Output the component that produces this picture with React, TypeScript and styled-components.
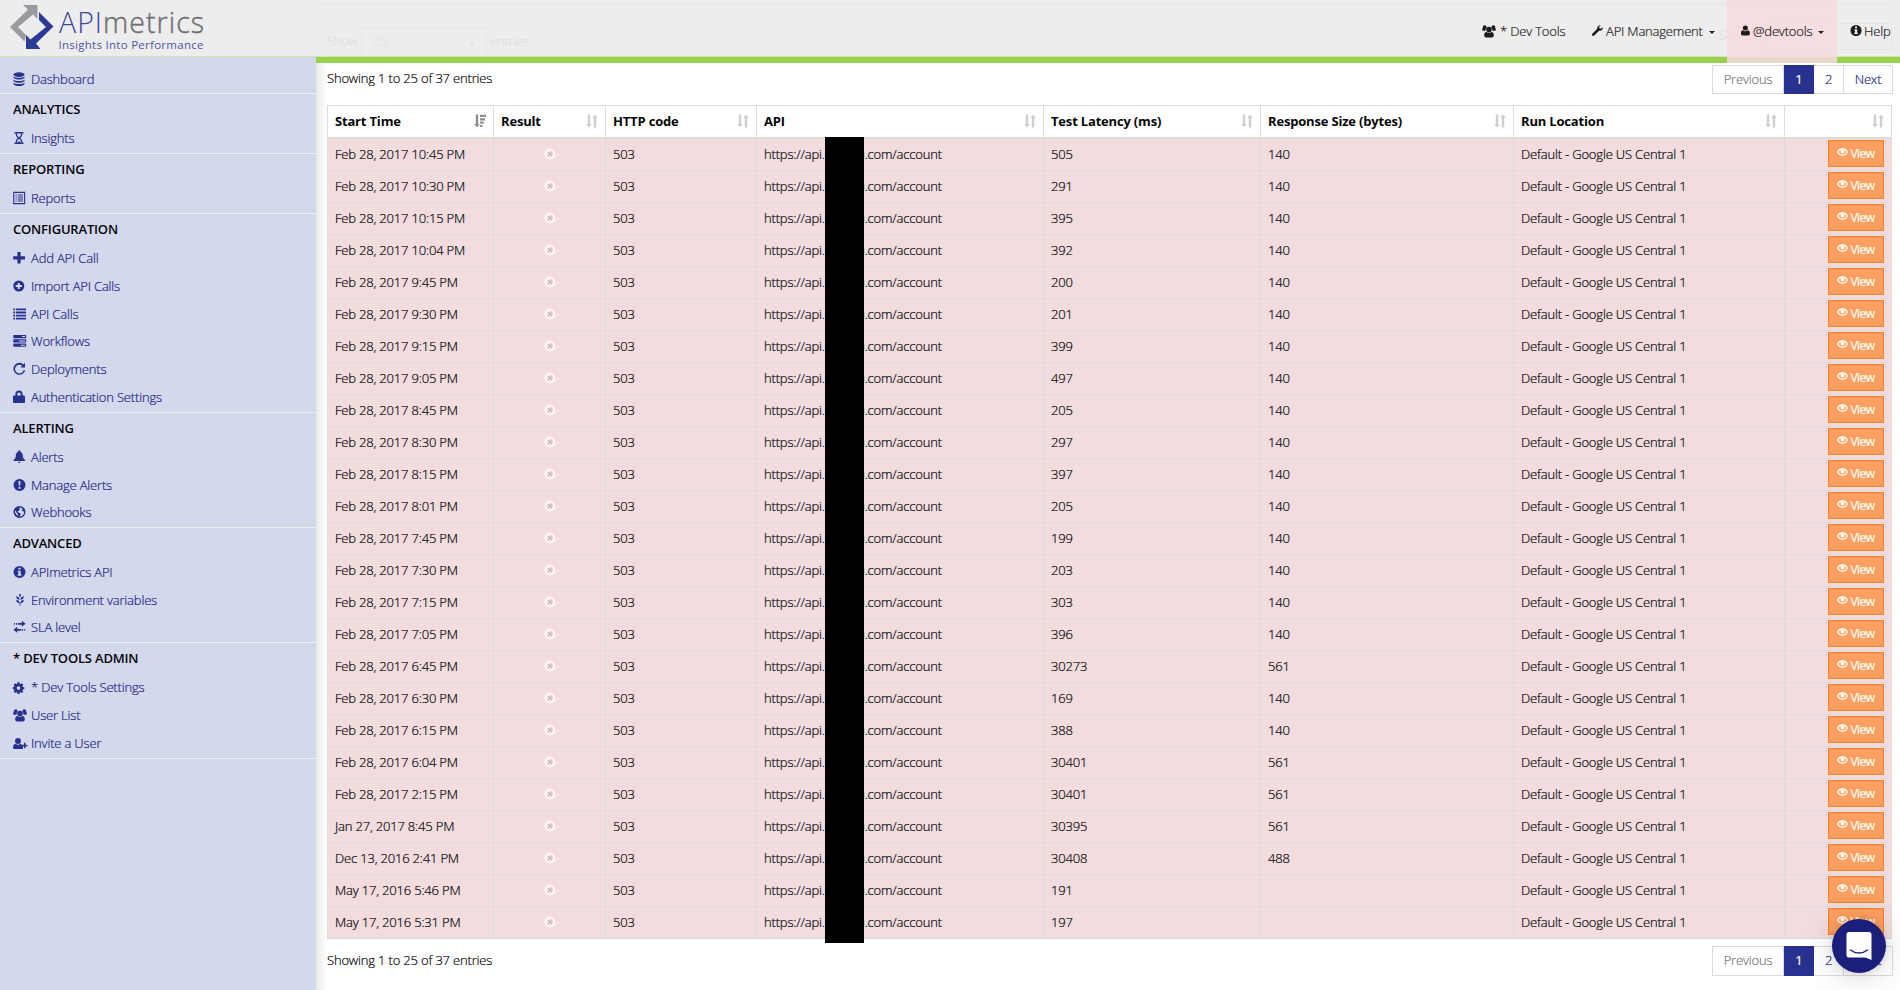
import React from 'react';
import styled, { createGlobalStyle, css } from 'styled-components';

const navy = '#27318f';
const linkNavy = '#1b2585';
const line = '#dadddc';

const GlobalStyle = createGlobalStyle`
  *, *::before, *::after { box-sizing: border-box; }
  body {
    margin: 0;
    background: #fff;
    color: #050509;
    font: 300 13px/18px "Open Sans", "Noto Sans", sans-serif;
    letter-spacing: -0.18px;
    -webkit-text-stroke: 0.2px;
  }
`;

const Page = styled.div`
  width: 1900px;
  height: 990px;
  overflow: hidden;
  display: flex;
  flex-direction: column;
  position: relative;
`;

const Header = styled.header`
  height: 57px;
  flex: none;
  position: relative;
  z-index: 2;
  display: flex;
  justify-content: space-between;
  background: #ededed;
  border-bottom: 1px solid #d3e5b5;
`;

const Ghost = styled.div`
  position: absolute;
  inset: 4px 8px 0 317px;
  overflow: hidden;
  border-top: 1px solid #e6e6e6;
  color: #e2e2e2;
  pointer-events: none;
`;

const GhostPart = styled.span<{ $x: number; $y: number }>`
  position: absolute;
  left: ${p => p.$x}px;
  top: ${p => p.$y}px;
`;

const GhostBox = styled(GhostPart)<{ $h: number }>`
  width: 126px;
  height: ${p => p.$h}px;
  border: 1px solid #e4e4e4;
  padding: 4px 11px;
`;

const GhostCaret = styled(GhostPart)`
  border: 3px solid transparent;
  border-top-color: #e0e0e0;
  border-bottom: 0;
`;

const Nav = styled.nav`
  display: flex;
  position: relative;
  height: 63px;
  color: #1c1c1c;
`;

const NavItem = styled.a<{ $w: number; $pad: number; $active?: boolean }>`
  width: ${p => p.$w}px;
  padding: 0 0 2px ${p => p.$pad}px;
  height: 63px;
  display: flex;
  align-items: center;
  white-space: nowrap;
  background: ${p => (p.$active ? 'rgba(247, 218, 222, 0.86)' : 'none')};
`;

const NavIcon = styled.span<{ $w: number }>`
  width: ${p => p.$w}px;
  display: flex;
  flex: none;
`;

const Caret = styled.i`
  margin: 3px 0 0 6px;
  border: 3px solid transparent;
  border-top-color: #222;
  border-bottom: 0;
`;

const Body = styled.div`
  flex: 1;
  display: flex;
  min-height: 0;
`;

const Sidebar = styled.aside`
  width: 316px;
  flex: none;
  background: #d4d8ec;
  padding-top: 8px;
`;

const Group = styled.section`
  border-bottom: 1px solid #ececf2;
  padding-bottom: 1px;
  &:first-child { padding-bottom: 0; }
`;

const GroupTitle = styled.h4`
  margin: 0;
  height: 30px;
  padding: 6px 0 0 13px;
  font-size: 13px;
  font-weight: 600;
  line-height: 18px;
  -webkit-text-stroke: 0;
`;

const SideLink = styled.a<{ $h?: number }>`
  height: ${p => p.$h ?? 28}px;
  padding: 0 0 ${p => (p.$h ? 1 : 0)}px 13px;
  display: flex;
  align-items: center;
  color: ${linkNavy};
`;

const IconSlot = styled.span`
  width: 18px;
  flex: none;
  display: flex;
  color: ${navy};
`;

const Main = styled.main`
  flex: 1;
  min-width: 0;
  border-top: 6px solid #9bd04e;
  background: linear-gradient(to right, #e9e9e9, #fff 11px);
  padding: 2px 7px 0 11px;
`;

const TableBar = styled.div<{ $bottom?: boolean }>`
  display: flex;
  justify-content: space-between;
  height: ${p => (p.$bottom ? 30 : 29)}px;
  line-height: ${p => (p.$bottom ? 28 : 26)}px;
  margin: ${p => (p.$bottom ? '7px 0 0' : '0 0 11px')};
`;

const Pager = styled.div`
  display: flex;
  border: 1px solid ${line};
  width: 181px;
`;

const PageButton = styled.a<{ $w: number; $kind?: 'on' | 'off' }>`
  width: ${p => p.$w}px;
  text-align: center;
  line-height: 26px;
  color: ${p => (p.$kind === 'off' ? '#777' : linkNavy)};
  & + & { border-left: 1px solid ${line}; }
  ${p =>
    p.$kind === 'on' &&
    css`
      && { margin: -1px 0; padding: 1px 0; border: 0; }
      background: ${navy};
      color: #fff;
      font-weight: 400;
      & + a { border-left: 0 !important; }
    `}
`;

const TableWrap = styled.div`
  position: relative;
  width: 1565px;
`;

const Table = styled.table`
  width: 1565px;
  table-layout: fixed;
  border-collapse: separate;
  border-spacing: 0;
  border-left: 1px solid ${line};
  border-top: 1px solid ${line};
`;

const Th = styled.th`
  height: 33px;
  padding: 0 7px 1px;
  text-align: left;
  font-weight: 700;
  border-right: 1px solid ${line};
  border-bottom: 2px solid ${line};
  background: #fff;
  -webkit-text-stroke: 0;
`;

const ThInner = styled.div`
  display: flex;
  align-items: center;
  justify-content: space-between;
`;

const Td = styled.td<{ $align?: 'center' | 'right' }>`
  height: 32px;
  padding: 0 7px 2px;
  line-height: 18px;
  text-align: ${p => p.$align ?? 'left'};
  white-space: nowrap;
  background: #f2dcde;
  border-right: 1px solid ${line};
  border-bottom: 1px solid ${line};
`;

const FailMark = styled.span`
  display: flex;
  justify-content: center;
  padding-left: 1px;
`;

const HostGap = styled.span`
  display: inline-block;
  width: 40px;
  text-align: right;
`;

const Redaction = styled.div`
  position: absolute;
  left: 498px;
  top: 32px;
  width: 39px;
  height: 806px;
  background: #000;
`;

const ViewButton = styled.button`
  display: inline-flex;
  align-items: center;
  justify-content: center;
  gap: 2px;
  vertical-align: top;
  width: 56px;
  height: 27px;
  padding: 0;
  border: 1px solid #ff7c2c;
  background: #ff9f5f;
  color: #fff;
  font: 400 12px/16px "Open Sans", sans-serif;
  letter-spacing: -0.5px;
  svg { margin-top: -2px; }
`;

const Chat = styled.div`
  position: absolute;
  left: 1832px;
  top: 919px;
  width: 54px;
  height: 54px;
  border-radius: 50%;
  background: #1b1f7b;
  box-shadow: 0 1px 6px rgba(0, 0, 0, 0.1), 0 2px 32px rgba(0, 0, 0, 0.18);
  display: flex;
  align-items: center;
  justify-content: center;
`;

const glyphs: Record<string, React.ReactNode> = {
  database: (
    <>
      <ellipse cx="6" cy="2.600" rx="5.500" ry="2.300" />
      <path d="M.5 4.200c1.500 2 9.500 2 11 0v1.600c-1.500 2.400-9.500 2.400-11 0zM.5 7.400c1.500 2 9.500 2 11 0V9c-1.500 2.400-9.500 2.400-11 0zM.5 10.600c1.500 2 9.500 2 11 0v1.300c-1.500 2.700-9.500 2.700-11 0z" />
    </>
  ),
  hourglass: (
    <path fillRule="evenodd" d="M1.500 1h9v1.500H9.300c0 2.500-.8 3.600-2.200 4.500 1.400.9 2.200 2 2.200 4.500h1.200V13h-9v-1.500h1.200c0-2.500.8-3.600 2.200-4.500C3.500 6.100 2.700 5 2.700 2.500H1.500zM3.900 2.500C4 4.700 5.200 5.500 6 6.200c.8-.7 2-1.500 2.100-3.700zM3.900 11.500h.7L6 10l1.400 1.500h.7C8 9.300 6.800 8.500 6 7.800c-.8.7-2 1.500-2.100 3.700z" />
  ),
  listAlt: (
    <path fillRule="evenodd" d="M.2.8h12v12.400H.2zM1.300 1.900v10.200h9.800V1.900zM2.500 3.500h1.200v1H2.500zm2.200 0H10v1H4.700zM2.500 5.500h1.200v1H2.500zm2.200 0H10v1H4.700zM2.500 7.500h1.200v1H2.500zm2.200 0H10v1H4.700zM2.500 9.500h1.200v1H2.500zm2.200 0H10v1H4.700z" />
  ),
  plus: <path d="M4.400 1h3.200v4.200H12v3.200H7.600v4.200H4.400V8.400H.2V5.200h4.200z" />,
  plusCircle: (
    <path fillRule="evenodd" d="M5.800 1.500a5.500 5.500 0 1 1 0 11 5.500 5.500 0 0 1 0-11zM4.800 3.900V6H2.700v2h2.100v2.100h2V8h2.100V6H6.800V3.900z" />
  ),
  list: (
    <path d="M.3 1.500h1.800v1.800H.3zm2.700 0h10v1.800H3zM.3 4.600h1.800v1.800H.3zm2.700 0h10v1.800H3zM.3 7.700h1.800v1.800H.3zm2.700 0h10v1.800H3zM.3 10.800h1.800v1.800H.3zm2.700 0h10v1.800H3z" />
  ),
  tasks: (
    <path fillRule="evenodd" d="M.8 1h11.900l.5.500v2.200l-.5.500H.8l-.5-.5V1.500zM9 2.100v1h3v-1zM.8 5.300h11.900l.5.500V8l-.5.500H.8L.3 8V5.800zM6 6.400v1h6v-1zM.8 9.600h11.900l.5.500v2.200l-.5.500H.8l-.5-.5v-2.200zM8 10.700v1h4v-1z" />
  ),
  repeat: (
    <path d="M6.300.8c1.600 0 3 .6 4 1.600L12 .8v4.600H7.500l1.600-1.600a4.300 4.300 0 1 0 1.400 4.400h1.700A6 6 0 1 1 6.300.8z" />
  ),
  lock: (
    <path fillRule="evenodd" d="M2.400 5.500V4.200a3.600 3.600 0 0 1 7.200 0v1.300H11l1 .7v6.200l-.7.700H.7l-.7-.7V6.200l1-.7zM4.300 5.500h3.400V4.200a1.700 1.700 0 0 0-3.400 0z" />
  ),
  bell: (
    <path d="M6.300.3c.8 0 .9.600.9 1.200 1.900.7 2.500 2.300 2.600 4.200.1 2.200.9 3.300 2.300 4.300v1H.5v-1C1.900 9 2.700 7.900 2.800 5.700c.1-1.900.7-3.500 2.600-4.200 0-.6.1-1.200.9-1.200zM5.100 11.700h2.400c0 1.800-2.400 1.800-2.400 0z" />
  ),
  exclaim: (
    <path fillRule="evenodd" d="M6.500 1a6 6 0 1 1 0 12 6 6 0 0 1 0-12zM5.400 3.200l.4 4.400h1.400l.4-4.400zM5.500 8.800v1.900h2V8.800z" />
  ),
  globe: (
    <path fillRule="evenodd" d="M6.500 1a6 6 0 1 1 0 12 6 6 0 0 1 0-12zM7 2.200l-1 1 1.200.8L6 5.500l-1.500 1 .8 1L7 8l.6 1.500-1 2 1.400.1 2.500-2.100.7-2.500-1.500-1-1-.5 1-1.500zM2.300 5l-.5 2 1.500 2.500L5 11.300 4.800 9 3 7z" />
  ),
  info: (
    <path fillRule="evenodd" d="M6.500 1a6 6 0 1 1 0 12 6 6 0 0 1 0-12zM5.400 2.800v1.700h2.200V2.800zM4.600 5.700v1h.8v2.800h-.8v1.200h3.900V9.500h-.8V5.700z" />
  ),
  grain: (
    <path d="M7 .5c1.300 1.200 1.300 2.400 0 3.700-1.300-1.300-1.300-2.500 0-3.700zM3.200 3.200C5.500 3.600 6.500 4.600 6.500 6.800 4.300 6.500 3.200 5.500 3.200 3.200zm7.600 0C8.500 3.600 7.500 4.600 7.500 6.800c2.200-.3 3.300-1.300 3.300-3.600zM3.200 6.700c2.300.4 3.300 1.400 3.300 3.600-2.200-.3-3.300-1.300-3.300-3.600zm7.600 0c-2.300.4-3.300 1.400-3.300 3.600 2.200-.3 3.300-1.300 3.300-3.600zM6.600 9.500h.8v3.300h-.8z" />
  ),
  transfer: (
    <path d="M8.800.8l3.800 3-3.800 3V4.700h-4V3h4zM1 3h1v1.700H1zm2 0h1v1.700H3zM4.300 6.800l-3.900 3 3.900 3v-2.100h4V9h-4zM9.200 9h1v1.700h-1zm2 0h1v1.700h-1z" />
  ),
  cog: (
    <path fillRule="evenodd" d="M4.500 2.300h2l.3 1.400 1 .4L9 3.300l1.300 1.400-.8 1.200.4 1 1.400.3v1.900l-1.400.3-.4 1 .8 1.200-1.400 1.300-1.200-.7-1 .4-.2 1.400h-2l-.3-1.400-1-.4-1.200.7-1.300-1.300.7-1.200-.4-1L-.2 9.100V7.200l1.200-.3.4-1-.7-1.200L2 3.300l1.200.8 1-.4zM5.500 6.300a1.800 1.800 0 1 0 0 3.600 1.800 1.800 0 0 0 0-3.600z" />
  ),
  users: (
    <path d="M2.700 1.300a1.900 1.900 0 0 1 1.500 3 3.700 3.700 0 0 0-.7 2.500H1.400C.5 6.800 0 6.200.2 5.300c.1-.6.300-1.300.7-1.500a1.900 1.900 0 0 1 1.800-2.500zm8.600 0a1.900 1.900 0 0 1 1.800 2.500c.4.200.6.900.7 1.500.2.900-.3 1.500-1.200 1.500h-2.100a3.700 3.700 0 0 0-.7-2.500 1.900 1.900 0 0 1 1.500-3zM7 2.800a2.800 2.800 0 1 1 0 5.600 2.800 2.800 0 0 1 0-5.600zM4.500 7.900c1.500 1.300 3.500 1.300 5 0 1.700.1 2.300 1.700 2.300 3.500 0 1.300-.8 2-2 2H4.200c-1.200 0-2-.7-2-2 0-1.800.6-3.400 2.300-3.500z" />
  ),
  invite: (
    <path d="M5 2a3 3 0 1 1 0 6 3 3 0 0 1 0-6zM2.500 7.700c1.500 1.400 3.500 1.400 5 0l1.200.6v1.500H10V13H1.600C.5 13 0 12.400 0 11.500c0-1.800.7-3.600 2.500-3.800zM11 6.800h1.500v2h2v1.500h-2v2H11v-2H9V8.800h2z" />
  ),
  user: (
    <path d="M4.700 1.500a2.700 2.700 0 1 1 0 5.400 2.700 2.700 0 0 1 0-5.400zM2.200 6.700c1.500 1.300 3.500 1.300 5 0 1.800.2 2.400 1.800 2.400 3.600 0 1.200-.7 2-1.800 2H1.700c-1.100 0-1.800-.8-1.800-2 0-1.800.5-3.400 2.300-3.600z" />
  ),
  wrench: (
    <path d="M12.800 3.500c.3 2-1.500 4.200-4 3.800L3.400 12.500c-1.300 1.300-3.300-.6-2-2L6.700 5.200C6.300 2.700 8.500.9 10.500 1.300L8.700 3l.4 1.700 1.700.5z" />
  ),
};

const Glyph = ({ name, size = 14 }: { name: string; size?: number }) => (
  <svg width={size} height={size} viewBox="0 0 14 14" fill="currentColor" overflow="visible">
    {glyphs[name]}
  </svg>
);

const SortIcon = ({ active }: { active?: boolean }) => (
  <svg width="12" height="14" viewBox="0 0 12 14" fill={active ? '#8e8e8e' : '#cfcfcf'}>
    {active ? (
      <path d="M1.800.5h2.400V10h1.600L3 13.600.200 10h1.600zM6 .8h6V3H6zm0 3.400h5v2.200H6zm0 3.400h3.700v2.200H6zM6 11h2.500v2H6z" />
    ) : (
      <path d="M1.800.5h2.400V10h1.600L3 13.600.200 10h1.600zM7.800 13.500h2.400V4h1.600L9 .4 6.200 4h1.600z" />
    )}
  </svg>
);

const FailIcon = () => (
  <svg width="12" height="12" viewBox="0 0 12 12">
    <circle cx="6" cy="6" r="4.700" fill="#f5e4e6" stroke="#fff" strokeWidth="1.500" />
    <path d="M3.900 3.900l4.200 4.200M8.100 3.900L3.900 8.100" stroke="#cfb2b5" strokeWidth="1.300" />
  </svg>
);

const EyeIcon = () => (
  <svg width="11" height="9" viewBox="0 0 11 9" fill="none" stroke="#fff" strokeWidth="1.200">
    <path d="M.5 4C2.800-.1 8.200-.1 10.500 4 8.200 8.200 2.800 8.200.500 4z" />
    <circle cx="5.500" cy="3.400" r="2" fill="#fff" stroke="none" />
  </svg>
);

const Logo = () => (
  <svg width="220" height="56" viewBox="0 0 220 56">
    <path fill="#999b9e" d="M10 27L28 9.500 23 5h14.500v14L33 14.500 18 27l8 8-1.500 6.500z" />
    <path fill="#2c3a96" d="M39 12L53.500 26.500 36 43.500l4.500 5.500H26V35l4.500 4.500L46 27l-7-7z" />
    <g fontFamily="Open Sans, sans-serif" letterSpacing="0">
      <text x="59" y="33" fontSize="28.500" textLength="145" fill="#3b46a0">
        API<tspan fontWeight="300" fill="#6f7073" stroke="#6f7073" strokeWidth="0.4">metrics</tspan>
      </text>
      <text x="58.500" y="48.500" fontSize="11.500" fontWeight="500" fill="#4c55ab" textLength="145">Insights Into Performance</text>
    </g>
  </svg>
);

type Link = [icon: string, label: string, height?: number];
const groups: { title?: string; links: Link[] }[] = [
  { links: [['database', 'Dashboard']] },
  { title: 'ANALYTICS', links: [['hourglass', 'Insights']] },
  { title: 'REPORTING', links: [['listAlt', 'Reports']] },
  {
    title: 'CONFIGURATION',
    links: [
      ['plus', 'Add API Call'],
      ['plusCircle', 'Import API Calls'],
      ['list', 'API Calls'],
      ['tasks', 'Workflows', 27],
      ['repeat', 'Deployments'],
      ['lock', 'Authentication Settings'],
    ],
  },
  { title: 'ALERTING', links: [['bell', 'Alerts'], ['exclaim', 'Manage Alerts'], ['globe', 'Webhooks', 27]] },
  { title: 'ADVANCED', links: [['info', 'APImetrics API'], ['grain', 'Environment variables'], ['transfer', 'SLA level', 27]] },
  { title: '* DEV TOOLS ADMIN', links: [['cog', '* Dev Tools Settings'], ['users', 'User List'], ['invite', 'Invite a User']] },
];

const columns: [label: string, width: number][] = [
  ['Start Time', 166],
  ['Result', 112],
  ['HTTP code', 151],
  ['API', 287],
  ['Test Latency (ms)', 217],
  ['Response Size (bytes)', 253],
  ['Run Location', 271],
  ['', 107],
];

const results: [time: string, latency: string, size: string][] = [
  ['Feb 28, 2017 10:45 PM', '505', '140'],
  ['Feb 28, 2017 10:30 PM', '291', '140'],
  ['Feb 28, 2017 10:15 PM', '395', '140'],
  ['Feb 28, 2017 10:04 PM', '392', '140'],
  ['Feb 28, 2017 9:45 PM', '200', '140'],
  ['Feb 28, 2017 9:30 PM', '201', '140'],
  ['Feb 28, 2017 9:15 PM', '399', '140'],
  ['Feb 28, 2017 9:05 PM', '497', '140'],
  ['Feb 28, 2017 8:45 PM', '205', '140'],
  ['Feb 28, 2017 8:30 PM', '297', '140'],
  ['Feb 28, 2017 8:15 PM', '397', '140'],
  ['Feb 28, 2017 8:01 PM', '205', '140'],
  ['Feb 28, 2017 7:45 PM', '199', '140'],
  ['Feb 28, 2017 7:30 PM', '203', '140'],
  ['Feb 28, 2017 7:15 PM', '303', '140'],
  ['Feb 28, 2017 7:05 PM', '396', '140'],
  ['Feb 28, 2017 6:45 PM', '30273', '561'],
  ['Feb 28, 2017 6:30 PM', '169', '140'],
  ['Feb 28, 2017 6:15 PM', '388', '140'],
  ['Feb 28, 2017 6:04 PM', '30401', '561'],
  ['Feb 28, 2017 2:15 PM', '30401', '561'],
  ['Jan 27, 2017 8:45 PM', '30395', '561'],
  ['Dec 13, 2016 2:41 PM', '30408', '488'],
  ['May 17, 2016 5:46 PM', '191', ''],
  ['May 17, 2016 5:31 PM', '197', ''],
];

const Pagination = () => (
  <Pager>
    <PageButton $w={70} $kind="off">Previous</PageButton>
    <PageButton $w={31} $kind="on">1</PageButton>
    <PageButton $w={29}>2</PageButton>
    <PageButton $w={49}>Next</PageButton>
  </Pager>
);

export default function App() {
  return (
    <Page>
      <GlobalStyle />
      <Header>
        <Ghost>
          <GhostPart $x={10} $y={27}>Show</GhostPart>
          <GhostBox $x={44} $y={22} $h={40}>25</GhostBox>
          <GhostCaret $x={152} $y={37} />
          <GhostPart $x={173} $y={27}>entries</GhostPart>
          <GhostPart $x={1402} $y={21}>Search:</GhostPart>
          <GhostBox $x={1449} $y={18} $h={27} />
        </Ghost>
        <Logo />
        <Nav>
          <NavItem $w={109} $pad={0}><NavIcon $w={18}><Glyph name="users" /></NavIcon>* Dev Tools</NavItem>
          <NavItem $w={136} $pad={0}><NavIcon $w={15}><Glyph name="wrench" size={13} /></NavIcon>API Management<Caret /></NavItem>
          <NavItem $w={110} $pad={14} $active><NavIcon $w={12}><Glyph name="user" size={13} /></NavIcon>@devtools<Caret /></NavItem>
          <NavItem $w={63} $pad={13}><NavIcon $w={14}><Glyph name="info" size={13} /></NavIcon>Help</NavItem>
        </Nav>
      </Header>
      <Body>
        <Sidebar>
          {groups.map((group, i) => (
            <Group key={i}>
              {group.title && <GroupTitle>{group.title}</GroupTitle>}
              {group.links.map(([icon, label, height]) => (
                <SideLink key={label} $h={height}>
                  <IconSlot><Glyph name={icon} /></IconSlot>
                  {label}
                </SideLink>
              ))}
            </Group>
          ))}
        </Sidebar>
        <Main>
          <TableBar>
            <span>Showing 1 to 25 of 37 entries</span>
            <Pagination />
          </TableBar>
          <TableWrap>
            <Table>
              <colgroup>
                {columns.map(([label, width]) => <col key={label} width={width} />)}
              </colgroup>
              <thead>
                <tr>
                  {columns.map(([label], i) => (
                    <Th key={label}><ThInner><span>{label}</span><SortIcon active={i === 0} /></ThInner></Th>
                  ))}
                </tr>
              </thead>
              <tbody>
                {results.map(([time, latency, size]) => (
                  <tr key={time}>
                    <Td>{time}</Td>
                    <Td $align="center"><FailMark><FailIcon /></FailMark></Td>
                    <Td>503</Td>
                    <Td>https://api.<HostGap>u</HostGap>.com/account</Td>
                    <Td>{latency}</Td>
                    <Td>{size}</Td>
                    <Td>Default - Google US Central 1</Td>
                    <Td $align="right"><ViewButton><EyeIcon />View</ViewButton></Td>
                  </tr>
                ))}
              </tbody>
            </Table>
            <Redaction />
          </TableWrap>
          <TableBar $bottom>
            <span>Showing 1 to 25 of 37 entries</span>
            <Pagination />
          </TableBar>
        </Main>
      </Body>
      <Chat>
        <svg width="26" height="30" viewBox="0 0 26 30">
          <path fill="#fff" d="M3 1h20a2.500 2.500 0 0 1 2.500 2.500V29l-6-2.500H3A2.500 2.500 0 0 1 .5 24V3.500A2.500 2.500 0 0 1 3 1z" />
          <path fill="none" stroke="#1b1f7b" strokeWidth="1.400" strokeLinecap="round" d="M4.500 19c5 4 12 4 17 0" />
        </svg>
      </Chat>
    </Page>
  );
}
